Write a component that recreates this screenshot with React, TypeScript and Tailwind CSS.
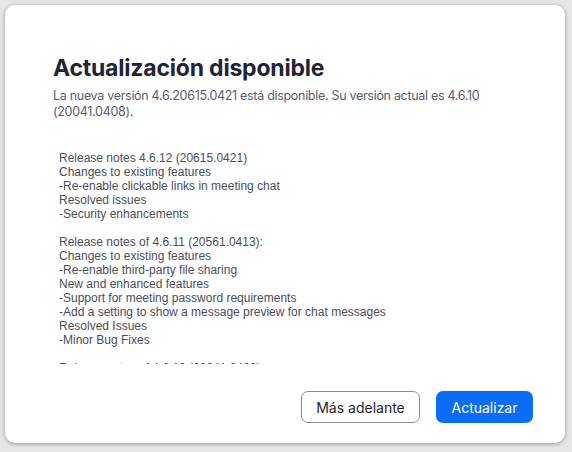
import React from 'react';

const notes = [
  'Release notes 4.6.12 (20615.0421)',
  'Changes to existing features',
  '-Re-enable clickable links in meeting chat',
  'Resolved issues',
  '-Security enhancements',
  '',
  'Release notes of 4.6.11 (20561.0413):',
  'Changes to existing features',
  '-Re-enable third-party file sharing',
  'New and enhanced features',
  '-Support for meeting password requirements',
  '-Add a setting to show a message preview for chat messages',
  'Resolved Issues',
  '-Minor Bug Fixes',
  '',
  'Release notes of 4.6.10 (20041.0408)',
  'Changes to existing features',
];

const App: React.FC = () => {
  return (
    <div className="w-[572px] h-[452px] overflow-hidden bg-[#e6e6e6] pt-[5px] pl-[5px]">
      <div className="w-[560px] h-[438px] bg-white rounded-[10px] shadow-[0_1px_4px_rgba(0,0,0,0.35)] flex flex-col pt-[49px] pl-[48px] pr-[32px] pb-[20px] font-['Inter',sans-serif]">
        <h1 className="text-[23px] leading-[28px] font-bold text-[#232333] tracking-[-0.2px]">
          Actualización disponible
        </h1>
        <p className="mt-[6px] text-[12.5px] leading-[16px] text-[#5b5b6e] tracking-[-0.3px]">
          La nueva versión 4.6.20615.0421 está disponible. Su versión actual es 4.6.10 (20041.0408).
        </p>

        <div className="mt-[31px] ml-[6px] h-[213px] shrink-0 overflow-hidden font-['Liberation_Sans',Arial,sans-serif] text-[12px] leading-[14px] text-[#4d4d5c]">
          {notes.map((line, i) => (
            <div key={i} className="h-[14px] whitespace-nowrap">
              {line}
            </div>
          ))}
        </div>

        <div className="mt-auto flex justify-end gap-[16px] text-[14px]">
          <button className="w-[119px] h-[32px] rounded-[7px] border border-[#8c8c8c] bg-white text-[#232333]">
            Más adelante
          </button>
          <button className="w-[97px] h-[32px] rounded-[7px] bg-[#0b6cf5] text-white">
            Actualizar
          </button>
        </div>
      </div>
    </div>
  );
};

export default App;
